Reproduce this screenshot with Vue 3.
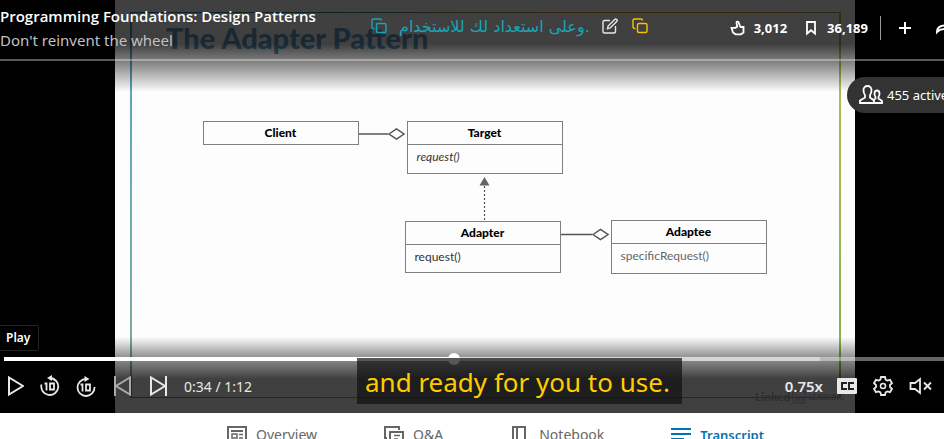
<script setup>
const nodes = [
  { name: 'Client', x: 88.5, y: 121.5, h: 23, method: '' },
  { name: 'Target', x: 292.5, y: 121.5, h: 52, method: 'request()', abstract: true },
  { name: 'Adapter', x: 290.5, y: 221.5, h: 51, method: 'request()' },
  { name: 'Adaptee', x: 496.5, y: 220.5, h: 53, method: 'specificRequest()', soft: true },
]
const played = 46.6
const buffered = 84.5
</script>

<template>
  <div class="page">
    <main class="player">
      <svg class="slide" viewBox="0 0 740 413" role="img" aria-label="The Adapter Pattern diagram">
        <defs>
          <linearGradient id="edge-top" x1="0" x2="1" y1="0" y2="0">
            <stop offset="0" stop-color="#2a7fa8" />
            <stop offset="0.35" stop-color="#4b8a6a" />
            <stop offset="0.65" stop-color="#d99a1c" />
            <stop offset="0.85" stop-color="#d98a10" />
            <stop offset="1" stop-color="#a3b040" />
          </linearGradient>
          <linearGradient id="edge-left" x1="0" x2="0" y1="0" y2="1">
            <stop offset="0" stop-color="#4d9cc0" />
            <stop offset="0.5" stop-color="#6fabb8" />
            <stop offset="1" stop-color="#7ba890" />
          </linearGradient>
          <linearGradient id="edge-right" x1="0" x2="0" y1="0" y2="1">
            <stop offset="0" stop-color="#b9bd5c" />
            <stop offset="1" stop-color="#7fb04a" />
          </linearGradient>
          <linearGradient id="edge-bottom" x1="0" x2="1" y1="0" y2="0">
            <stop offset="0" stop-color="#6c9080" />
            <stop offset="0.3" stop-color="#b0a048" />
            <stop offset="1" stop-color="#8fb050" />
          </linearGradient>
        </defs>
        <rect width="740" height="413" fill="#fefdfe" />
        <rect x="15" y="12" width="711" height="1" fill="url(#edge-top)" />
        <rect x="15" y="12" width="2" height="386" fill="url(#edge-left)" />
        <rect x="724" y="12" width="2" height="386" fill="url(#edge-right)" />
        <rect x="15" y="397" width="711" height="1" fill="url(#edge-bottom)" />
        <text class="slide-title" x="51" y="49">The Adapter Pattern</text>

        <g v-for="node in nodes" :key="node.name" class="node">
          <rect :x="node.x" :y="node.y" width="155" :height="node.h" />
          <path v-if="node.method" :d="`M${node.x} ${node.y + 23}h155`" />
          <text class="node-name" :x="node.x + 77" :y="node.y + 15">{{ node.name }}</text>
          <text
            v-if="node.method"
            class="node-method"
            :class="{ abstract: node.abstract, soft: node.soft }"
            :x="node.x + 9"
            :y="node.y + 39"
          >{{ node.method }}</text>
        </g>
        <g fill="none" stroke="#555" stroke-width="1.5">
          <path d="M244 134h29M274 134l7.500-5 7.500 5-7.500 5z" />
          <path d="M446 234.500h31M478 234.500l7.500-5 7.500 5-7.500 5z" />
          <path d="M369.500 186v35" stroke-width="1.200" stroke-dasharray="2 2" />
        </g>
        <path d="M369.500 177l5 8.500h-10z" fill="#666" />
        <g class="watermark">
          <text x="640" y="401" font-size="12">Linked</text>
          <rect x="678" y="391" width="12" height="12" rx="1" fill="none" stroke="#b4b4b4" />
          <text x="680" y="401" font-size="10">in</text>
          <text x="694" y="400" font-size="7">LEARNING</text>
        </g>
      </svg>

      <header class="top">
        <div class="course">
          <h1>Programming Foundations: Design Patterns</h1>
          <p>Don't reinvent the wheel</p>
        </div>
        <div class="translation">
          <button class="icon-btn teal" aria-label="Copy translation">
            <svg width="16" height="16" viewBox="0 0 16 16" fill="none" stroke="currentColor" stroke-width="1.4">
              <rect x="5.500" y="5.500" width="9.500" height="9" rx="1.500" />
              <path d="M3.500 10.500H2.500a1.500 1.500 0 0 1-1.500-1.500V2.500A1.500 1.500 0 0 1 2.500 1H9a1.500 1.500 0 0 1 1.500 1.500" />
            </svg>
          </button>
          <span class="arabic" lang="ar">وعلى استعداد لك للاستخدام.</span>
          <button class="icon-btn edit" aria-label="Edit translation">
            <svg width="16" height="16" viewBox="0 0 16 16" fill="none" stroke="currentColor" stroke-width="1.4">
              <path d="M8 2.500H2.500A1.500 1.500 0 0 0 1 4v9.500A1.500 1.500 0 0 0 2.500 15H12a1.500 1.500 0 0 0 1.500-1.500V8" />
              <path d="M5.500 10.800l.6-2.800 6.600-6.600a1.400 1.400 0 0 1 2 2L8.200 10z" />
            </svg>
          </button>
          <button class="icon-btn yellow" aria-label="Copy caption">
            <svg width="16" height="16" viewBox="0 0 16 16" fill="none" stroke="currentColor" stroke-width="1.4">
              <rect x="5.500" y="5.500" width="9.500" height="9" rx="1.500" />
              <path d="M3.500 10.500H2.500a1.500 1.500 0 0 1-1.500-1.500V2.500A1.500 1.500 0 0 1 2.500 1H9a1.500 1.500 0 0 1 1.500 1.500" />
            </svg>
          </button>
        </div>
        <div class="actions">
          <button class="stat">
            <svg width="16" height="16" viewBox="0 0 16 16" fill="none" stroke="currentColor" stroke-width="1.800">
              <path d="M1.500 7.800h4L7.300 6.500 6.500 3.200C6.300 1.500 8 1.200 8.600 2.500L10.500 7h3v5.500l-2.500 1.800H5.500L3 12.500z" />
            </svg>
            3,012
          </button>
          <button class="stat save">
            <svg width="12" height="16" viewBox="0 0 12 16" fill="none" stroke="currentColor" stroke-width="1.800">
              <path d="M2 2h8v11.500L6 10.200 2 13.500z" />
            </svg>
            36,189
          </button>
          <i class="divider"></i>
          <button class="icon-btn" aria-label="Add">
            <svg width="12" height="12" viewBox="0 0 12 12" fill="none" stroke="currentColor" stroke-width="2"><path d="M6 0v12M0 6h12" /></svg>
          </button>
          <button class="icon-btn share" aria-label="Share">
            <svg width="18" height="14" viewBox="0 0 18 14" fill="none" stroke="currentColor" stroke-width="2"><path d="M1 11c0-4 3-6.500 9-6.500V1l6 5-6 5V8C5 8 3 9 1 11z" /></svg>
          </button>
        </div>
      </header>

      <button class="learners">
        <svg width="24" height="20" viewBox="0 0 24 20" fill="none" stroke="currentColor" stroke-width="1.800">
          <path d="M1 18v-2.500l5-3V10C4.800 8.500 4.500 6.500 4.500 5a4 4 0 0 1 8 0c0 1.500-.3 3.500-1.500 5v2.500l4 3V18z" />
          <path d="M15 18h8v-2l-3.500-2.500v-1.500c1.600-2 1.500-6.500-1.500-6.500s-3.100 4.500-1.500 6.500v1.500l-2 1.200" />
        </svg>
        455 active learners
      </button>

      <div class="bottom">
        <span class="hint" role="tooltip">Play</span>
        <div class="track" role="progressbar" aria-label="Playback position" :aria-valuenow="played">
          <i class="buffered" :style="{ width: buffered + '%' }"></i>
          <i class="played" :style="{ width: played + '%' }"></i>
          <i class="knob" :style="{ left: played + '%' }"></i>
        </div>
        <div class="controls">
          <button class="icon-btn" aria-label="Play">
            <svg width="20" height="22" viewBox="0 0 20 22" fill="none" stroke="currentColor" stroke-width="2"><path d="M5 2.500v17L19 11z" /></svg>
          </button>
          <button class="icon-btn" aria-label="Back 10 seconds">
            <svg width="20" height="22" viewBox="0 0 20 22" fill="none" stroke="currentColor" stroke-width="1.800">
              <path d="M1.500 9.500a8.500 8.500 0 1 0 8.500-6.500h-1M15.500 5.500A8.500 8.500 0 0 0 10 3" /><path d="M12 0v6L7 3z" fill="currentColor" stroke="none" />
              <path d="M4.500 8.500h2v7M10 8.500h4v6h-4z" />
            </svg>
          </button>
          <button class="icon-btn" aria-label="Forward 10 seconds">
            <svg width="20" height="22" viewBox="0 0 20 22" fill="none" stroke="currentColor" stroke-width="1.800">
              <path d="M18.500 12a8.500 8.500 0 1 1-8.500-8" /><path d="M8.500 1v6l5-3z" fill="currentColor" stroke="none" />
              <path d="M4.500 9.500h2v7M10 9.500h4v6h-4z" />
            </svg>
          </button>
          <button class="icon-btn dim" aria-label="Previous">
            <svg width="20" height="22" viewBox="0 0 20 22" fill="none" stroke="currentColor" stroke-width="2"><path d="M3 1v20M18 2.500v17L4 11z" /></svg>
          </button>
          <button class="icon-btn" aria-label="Next">
            <svg width="20" height="22" viewBox="0 0 20 22" fill="none" stroke="currentColor" stroke-width="2"><path d="M18 1v20M3 2.500v17L17 11z" /></svg>
          </button>
          <span class="time">0:34 / 1:12</span>
          <button class="speed">0.75x</button>
          <button class="icon-btn" aria-label="Captions">
            <svg width="20" height="16" viewBox="0 0 20 16"><rect width="20" height="16" rx="1" fill="currentColor" /><path d="M9 6V5H5v6h4v-1M16 6V5h-4v6h4v-1" fill="none" stroke="#222" stroke-width="2" /></svg>
          </button>
          <button class="icon-btn" aria-label="Settings">
            <svg width="20" height="20" viewBox="0 0 20 20" fill="none" stroke="currentColor" stroke-width="1.800">
              <path d="M8 1h4l.6 2.600 1.800 1 2.600-.8 2 3.400-2 1.800v2l2 1.800-2 3.400-2.600-.8-1.800 1L12 19H8l-.6-2.600-1.800-1-2.600.8-2-3.400L3 11V9L1 7.200l2-3.400 2.600.8 1.800-1z" />
              <circle cx="10" cy="10" r="2.500" stroke-width="1.500" />
            </svg>
          </button>
          <button class="icon-btn" aria-label="Unmute">
            <svg width="24" height="18" viewBox="0 0 24 18" fill="none" stroke="currentColor" stroke-width="1.800"><path d="M1.500 6h4.500L11 2v14l-5-4H1.500zM15 5.500l7 7M22 5.500l-7 7" /></svg>
          </button>
        </div>
      </div>

      <p class="caption">and ready for you to use.</p>
    </main>

    <nav class="tabs">
      <a href="#overview">
        <svg width="20" height="16" viewBox="0 0 20 16" fill="none" stroke="currentColor" stroke-width="2"><path d="M1 1h18v14H1z" /><path d="M4 5h12" /><path d="M5 8h5v4H5zM12 8.500h4M12 12h4" stroke-width="1.500" /></svg>
        Overview
      </a>
      <a href="#qa">
        <svg width="20" height="16" viewBox="0 0 20 16" fill="none" stroke="currentColor" stroke-width="2"><path d="M3 12H1V1h14v3M6 16V6h13v10" /><path d="M10 9.500h6M10 13h4" stroke-width="1.500" /></svg>
        Q&amp;A
      </a>
      <a href="#notebook">
        <svg width="20" height="16" viewBox="0 0 20 16" fill="none" stroke="currentColor" stroke-width="2"><path d="M3 16V1h12v15M7 1v15" /></svg>
        Notebook
      </a>
      <a href="#transcript" class="active">
        <svg width="20" height="14" viewBox="0 0 20 14" fill="none" stroke="currentColor" stroke-width="2"><path d="M0 3h20M0 8h20M0 13h13" /></svg>
        Transcript
      </a>
    </nav>
  </div>
</template>

<style>
body {
  margin: 0;
  overflow: hidden;
}
</style>

<style scoped>
.page {
  height: 100vh;
  display: flex;
  flex-direction: column;
  overflow: hidden;
  background: #fff;
  font-family: "Noto Sans", "Open Sans", sans-serif;
}
.player {
  flex: 1;
  min-height: 0;
  width: calc(100% + 26px);
  position: relative;
  display: grid;
  grid-template-rows: minmax(0, 1fr);
  grid-template-columns: minmax(0, 1fr);
  background: #000;
}
.slide,
.top,
.bottom {
  grid-area: 1 / 1;
}
.slide {
  height: 100%;
  max-width: 100%;
  justify-self: center;
  display: block;
}
.slide-title {
  font: 900 29px Lato, sans-serif;
  fill: #5f9fcc;
}
.node rect,
.node path {
  fill: none;
  stroke: #7c8083;
}
.node-name {
  font: 900 12px Lato, sans-serif;
  text-anchor: middle;
}
.node-method {
  font: 400 12px Lato, sans-serif;
  fill: #333;
}
.node-method.abstract {
  font-style: italic;
}
.node-method.soft {
  fill: #666;
}
.watermark {
  font-family: Lato, sans-serif;
  font-weight: 700;
  fill: #b4b4b4;
}
button {
  padding: 0;
  border: 0;
  background: none;
  color: inherit;
  font: inherit;
  display: flex;
  align-items: center;
  white-space: nowrap;
}
svg {
  flex: none;
}
.top {
  align-self: start;
  height: 92px;
  display: flex;
  align-items: flex-start;
  justify-content: space-between;
  color: #fff;
  position: relative;
  background: linear-gradient(rgba(0, 0, 0, 0.75) 48%, rgba(0, 0, 0, 0.45) 70%, transparent);
}
.top::after {
  content: "";
  position: absolute;
  left: 0;
  right: 0;
  top: 59px;
  height: 2px;
  background: rgba(255, 255, 255, 0.35);
}
.course {
  width: 371px;
  padding-top: 4px;
}
h1,
p {
  margin: 0;
  white-space: nowrap;
}
h1 {
  font: 600 15px/24px "Open Sans", sans-serif;
}
.course p {
  font-size: 15px;
  line-height: 24px;
  color: #c0c0c0;
}
.translation,
.actions {
  display: flex;
  align-items: center;
  height: 56px;
}
.translation {
  height: 52px;
}
.teal,
.arabic {
  color: #18a5b5;
}
.arabic {
  font-family: "DejaVu Sans", sans-serif;
  font-size: 16px;
  margin: 0 12px;
}
.edit {
  margin-right: 14px;
  color: #e8e8e8;
}
.yellow {
  color: #f5c400;
}
.actions {
  margin-left: auto;
  font: 700 13px "Noto Sans", sans-serif;
}
.stat {
  gap: 8px;
}
.save {
  gap: 10px;
  margin-left: 18px;
}
.divider {
  width: 1px;
  height: 24px;
  margin: 0 18px 0 12px;
  background: #999;
}
.share {
  margin: 0 16px 0 25px;
}
.learners {
  position: absolute;
  top: 77px;
  right: -40px;
  left: calc(100% - 123px);
  height: 36px;
  padding-left: 12px;
  gap: 4px;
  border-radius: 18px 0 0 18px;
  background: #333;
  color: #fff;
  font-size: 13px;
}
.bottom {
  align-self: end;
  position: relative;
  color: #e8e8e8;
  padding: 20px 0 0 4px;
  background: linear-gradient(transparent, rgba(0, 0, 0, 0.4) 25%, rgba(0, 0, 0, 0.75) 55%);
}
.hint {
  position: absolute;
  left: -2px;
  bottom: 62px;
  padding: 0 8px 0 7px;
  border: 1px solid #222;
  border-radius: 2px;
  background: #000;
  color: #fff;
  font-size: 12px;
  font-weight: 600;
  line-height: 24px;
}
.track {
  position: relative;
  height: 4px;
  background: rgba(255, 255, 255, 0.4);
}
.track i {
  position: absolute;
  left: 0;
  top: 0;
  height: 4px;
}
.buffered {
  background: rgba(255, 255, 255, 0.4);
}
.played {
  background: #fff;
}
.track .knob {
  top: -4px;
  width: 12px;
  height: 12px;
  margin-left: -6px;
  border-radius: 50%;
  background: #fff;
}
.controls {
  height: 50px;
  display: flex;
  align-items: center;
  gap: 16px;
  padding: 0 37px 2px 0;
}
.dim {
  color: #aaa;
}
.time {
  font-size: 14px;
}
.speed {
  margin: 0 -2px 0 auto;
  font-size: 15px;
  font-weight: 600;
}
.caption {
  position: absolute;
  left: 357px;
  bottom: 9px;
  padding: 2px 12px 0 8px;
  background: rgba(16, 16, 16, 0.7);
  color: #fc0;
  font-size: 26px;
  line-height: 44px;
}
.tabs {
  height: 26px;
  display: flex;
  gap: 67px;
  padding-left: 227px;
  overflow: hidden;
}
.tabs a {
  display: flex;
  align-items: flex-start;
  gap: 9px;
  padding-top: 13px;
  color: #666;
  font-size: 14px;
  line-height: 18px;
  text-decoration: none;
  white-space: nowrap;
}
.tabs .active {
  color: #0073b1;
  font-size: 13px;
  font-weight: 600;
}
</style>
